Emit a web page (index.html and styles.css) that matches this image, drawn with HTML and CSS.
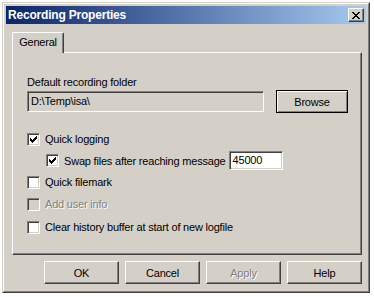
FILE: index.html
```html
<!DOCTYPE html>
<html lang="en">
<head>
  <meta charset="UTF-8" />
  <title>Recording Properties</title>
  <link rel="stylesheet" href="styles.css">
</head>
<body>

  <!-- dialog window -->
  <div class="window">
    <div class="window-inner">
      <div class="titlebar">
        <span class="title">Recording Properties</span>
        <button class="close-btn">
          <svg width="8" height="7" viewBox="0 0 8 7"><path d="M0 0h2v1H0zM6 0h2v1H6zM1 1h2v1H1zM5 1h2v1H5zM2 2h4v1H2zM3 3h2v1H3zM2 4h4v1H2zM1 5h2v1H1zM5 5h2v1H5zM0 6h2v1H0zM6 6h2v1H6z" fill="#000"/></svg>
        </button>
      </div>

      <div class="dialog">
        <div class="tabs">
          <div class="tab active">General</div>
        </div>

        <div class="panel">
          <div class="label">Default recording folder</div>
          <div class="folder-row">
            <div class="field readonly">D:\Temp\isa\</div>
            <button class="btn default">Browse</button>
          </div>

          <div class="checks">
            <div class="check-row">
              <span class="box"><svg width="7" height="7" viewBox="0 0 7 7"><path d="M0 2h1v1h1v1h1V3h1V2h1V1h1V0h1v3H6v1H5v1H4v1H3v1H2V6H1V5H0z" fill="#000"/></svg></span>
              Quick logging
            </div>
            <div class="check-row indent">
              <span class="box"><svg width="7" height="7" viewBox="0 0 7 7"><path d="M0 2h1v1h1v1h1V3h1V2h1V1h1V0h1v3H6v1H5v1H4v1H3v1H2V6H1V5H0z" fill="#000"/></svg></span>
              Swap files after reaching message
              <div class="field number">45000</div>
            </div>
            <div class="check-row">
              <span class="box"></span>
              Quick filemark
            </div>
            <div class="check-row disabled">
              <span class="box"></span>
              Add user info
            </div>
            <div class="check-row last">
              <span class="box"></span>
              Clear history buffer at start of new logfile
            </div>
          </div>
        </div>

        <div class="buttons">
          <button class="btn">OK</button>
          <button class="btn">Cancel</button>
          <button class="btn disabled">Apply</button>
          <button class="btn">Help</button>
        </div>
      </div>
    </div>
  </div>

</body>
</html>
```

FILE: styles.css
```css
/*── page ──*/
body {
  margin: 0;
  background: #fff;
  font-family: "Liberation Sans", Arial, sans-serif;
  font-size: 11px;
  letter-spacing: -0.2px;
  color: #000;
}
/*── window frame ──*/
.window {
  margin: 2px 0 0 2px;
  width: 368px;
  height: 291px;
  box-sizing: border-box;
  border: 1px solid;
  border-color: #d4d0c8 #404040 #404040 #d4d0c8;
  background: #d4d0c8;
}
.window-inner {
  height: 100%;
  box-sizing: border-box;
  border: 1px solid;
  border-color: #fff #808080 #808080 #fff;
  padding: 2px;
  display: flex;
  flex-direction: column;
}
.titlebar {
  height: 18px;
  flex: none;
  display: flex;
  align-items: center;
  justify-content: space-between;
  padding: 0 2px 0 2px;
  background: linear-gradient(to right, #0a246a, #a6caf0);
}
.title {
  color: #fff;
  font-weight: bold;
  font-size: 12px;
  letter-spacing: -0.2px;
}
.close-btn {
  width: 16px;
  height: 14px;
  padding: 0;
  margin: 0;
  display: flex;
  align-items: center;
  justify-content: center;
  background: #d4d0c8;
  border: 1px solid;
  border-color: #fff #404040 #404040 #fff;
  box-shadow: inset -1px -1px #808080;
}
/*── dialog body ──*/
.dialog {
  flex: 1;
  display: flex;
  flex-direction: column;
  padding: 8px 4px 0 6px;
}
.tabs {
  display: flex;
  height: 20px;
}
.tab {
  position: relative;
  z-index: 1;
  width: 52px;
  height: 21px;
  box-sizing: border-box;
  background: #d4d0c8;
  border: 1px solid;
  border-bottom: none;
  border-color: #fff #404040 #fff #fff;
  border-radius: 2px 2px 0 0;
  box-shadow: inset -1px 0 #808080;
  line-height: 19px;
  text-align: center;
}
.panel {
  height: 203px;
  box-sizing: border-box;
  border: 1px solid;
  border-color: #fff #404040 #404040 #fff;
  box-shadow: inset -1px -1px #808080;
  padding: 23px 0 0 14px;
}
.label {
  height: 13px;
  line-height: 13px;
}
.folder-row {
  display: flex;
  align-items: center;
  height: 23px;
  margin-top: 1px;
}
/*── fields ──*/
.field {
  box-sizing: border-box;
  border: 1px solid;
  border-color: #808080 #fff #fff #808080;
  box-shadow: inset 1px 1px #404040, inset -1px -1px #d4d0c8;
  padding-left: 3px;
  background: #fff;
}
.field.readonly {
  width: 237px;
  height: 21px;
  line-height: 19px;
  background: #d4d0c8;
}
.field.number {
  width: 54px;
  height: 19px;
  line-height: 17px;
  margin-left: 3px;
}
/*── buttons ──*/
.btn {
  width: 75px;
  height: 23px;
  padding: 0;
  margin: 0;
  box-sizing: border-box;
  font: inherit;
  letter-spacing: inherit;
  color: #000;
  background: #d4d0c8;
  border: 1px solid;
  border-color: #fff #404040 #404040 #fff;
  box-shadow: inset -1px -1px #808080;
}
.btn.default {
  width: 72px;
  margin-left: 12px;
  border-color: #000;
  box-shadow: inset 1px 1px #fff, inset -1px -1px #808080;
}
.btn.disabled {
  color: #808080;
  text-shadow: 1px 1px #fff;
}
.buttons {
  display: flex;
  justify-content: flex-end;
  gap: 6px;
  margin-top: 6px;
}
/*── checkboxes ──*/
.checks {
  margin-top: 15px;
}
.check-row {
  display: flex;
  align-items: center;
  height: 22px;
}
.check-row.indent {
  height: 21px;
  padding-left: 19px;
}
.check-row.last {
  margin-top: 1px;
}
.box {
  width: 13px;
  height: 13px;
  flex: none;
  box-sizing: border-box;
  margin-right: 5px;
  display: flex;
  align-items: center;
  justify-content: center;
  background: #fff;
  border: 1px solid;
  border-color: #808080 #fff #fff #808080;
  box-shadow: inset 1px 1px #404040, inset -1px -1px #d4d0c8;
}
.check-row.disabled {
  color: #808080;
  text-shadow: 1px 1px #fff;
}
.check-row.disabled .box {
  background: #d4d0c8;
}
```
